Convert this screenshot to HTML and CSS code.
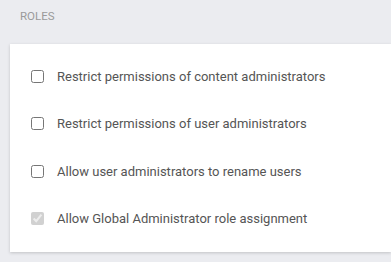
FILE: index.html
```html
<!DOCTYPE html>
<html lang="en">
<head>
  <meta charset="UTF-8" />
  <meta name="viewport" content="width=device-width, initial-scale=1.0">
  <title>Roles</title>
  <link rel="stylesheet" href="styles.css">
</head>
<body>
  <h2 class="section-title">ROLES</h2>
  <div class="card">
    <label class="option">
      <input type="checkbox">
      <span>Restrict permissions of content administrators</span>
    </label>
    <label class="option">
      <input type="checkbox">
      <span>Restrict permissions of user administrators</span>
    </label>
    <label class="option">
      <input type="checkbox">
      <span>Allow user administrators to rename users</span>
    </label>
    <label class="option">
      <input type="checkbox" checked disabled>
      <span>Allow Global Administrator role assignment</span>
    </label>
  </div>
</body>
</html>
```

FILE: styles.css
```css
body {
  font-family: Roboto, "Liberation Sans", Arial, sans-serif;
  margin: 0;
  padding: 0 0 0 10px;
  background-color: #ebecf0;
  height: 262px;
  overflow: hidden;
}
.section-title {
  margin: 0;
  padding: 9px 0 0 10px;
  height: 32px;
  box-sizing: border-box;
  font-size: 11.5px;
  font-weight: normal;
  color: #9a9a9a;
  line-height: 14px;
}
.card {
  margin-top: 12px;
  padding: 9px 0 10px;
  background-color: #fff;
  box-shadow: 0 1px 3px rgba(0, 0, 0, 0.18);
}
.option {
  display: flex;
  align-items: center;
  height: 47.34px;
  padding-left: 21px;
  font-size: 13px;
  color: #555;
}
.option input {
  width: 13px;
  height: 13px;
  margin: 0 13px 0 0;
}
```
